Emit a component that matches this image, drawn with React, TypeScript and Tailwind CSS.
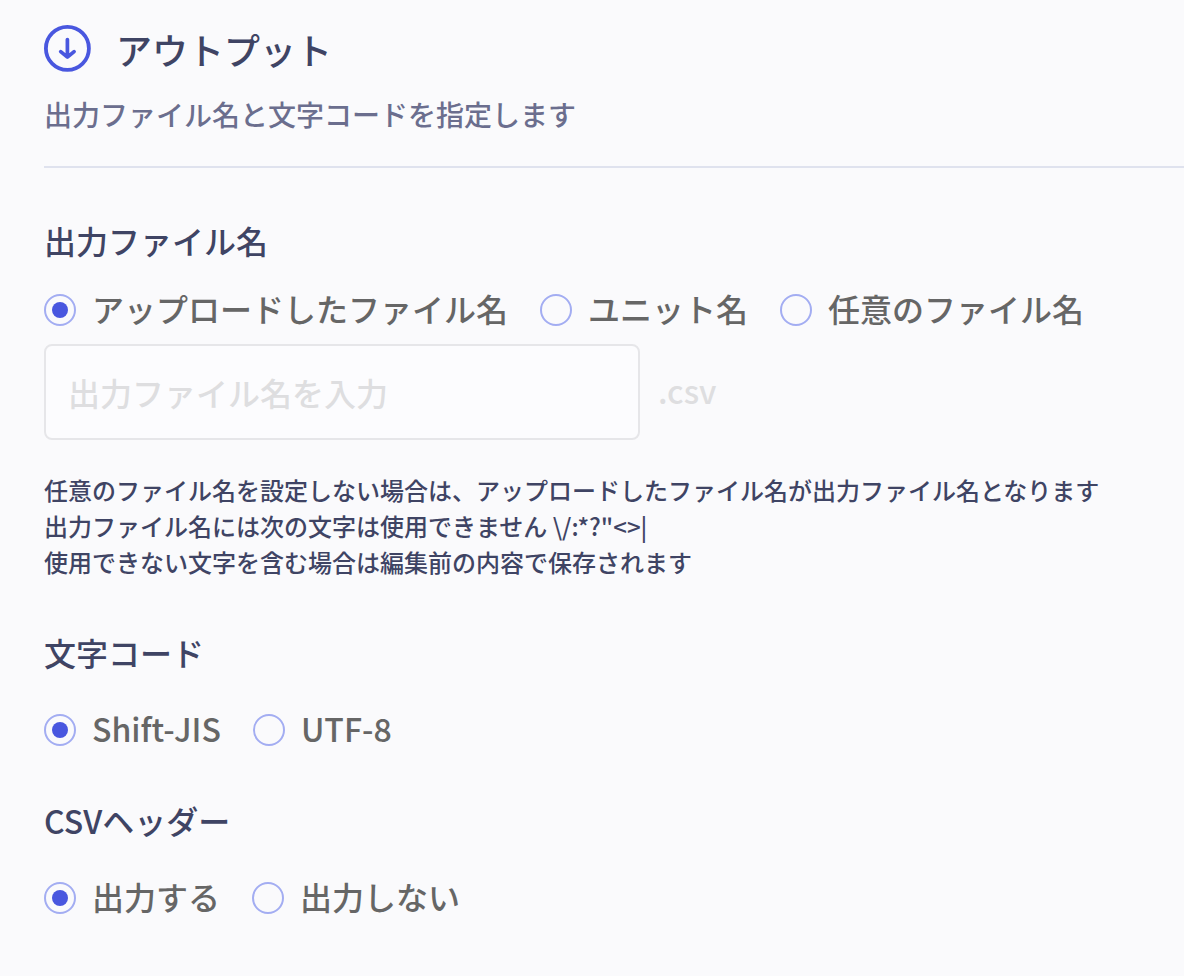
import React, { useState } from 'react';

interface RadioOption {
  value: string;
  label: string;
}

interface RadioGroupProps {
  name: string;
  legend: string;
  options: RadioOption[];
  value: string;
  onChange: (value: string) => void;
}

const RadioGroup: React.FC<RadioGroupProps> = ({ name, legend, options, value, onChange }) => (
  <div role="radiogroup" aria-label={legend} className="flex flex-wrap gap-x-8">
    {options.map((option) => (
      <label key={option.value} className="flex items-center gap-4 text-[32px] leading-12 text-[#666666]">
        <input
          type="radio"
          name={name}
          value={option.value}
          checked={value === option.value}
          onChange={() => onChange(option.value)}
          className="mt-1 size-8 shrink-0 appearance-none rounded-full border-2 border-[#a3adf2] bg-clip-content p-1.5 checked:bg-[#4957df]"
        />
        {option.label}
      </label>
    ))}
  </div>
);

const fileNameOptions: RadioOption[] = [
  { value: 'uploaded', label: 'アップロードしたファイル名' },
  { value: 'unit', label: 'ユニット名' },
  { value: 'custom', label: '任意のファイル名' },
];

const encodingOptions: RadioOption[] = [
  { value: 'sjis', label: 'Shift-JIS' },
  { value: 'utf8', label: 'UTF-8' },
];

const headerOptions: RadioOption[] = [
  { value: 'on', label: '出力する' },
  { value: 'off', label: '出力しない' },
];

export default function App() {
  const [fileNameType, setFileNameType] = useState('uploaded');
  const [fileName, setFileName] = useState('');
  const [encoding, setEncoding] = useState('sjis');
  const [csvHeader, setCsvHeader] = useState('on');
  const isCustom = fileNameType === 'custom';

  return (
    <main className="min-h-screen bg-[#fafafc] pt-6 pb-12 pl-11 font-['Noto_Sans_CJK_JP',sans-serif] font-medium text-[#3f4464]">
      <header className="border-b-2 border-[#dfe2ee] pb-8">
        <div className="flex items-center gap-6">
          <svg viewBox="0 0 48 48" fill="none" stroke="#4957df" className="size-12 shrink-0" aria-hidden="true">
            <circle cx="23.4" cy="23.4" r="21.5" strokeWidth="3.8" />
            <path d="M23.4 14.6v17.4M16.7 26.6l6.7 5.6 6.7-5.6" strokeWidth="3.7" strokeLinecap="round" strokeLinejoin="round" />
          </svg>
          <h1 className="text-[36px] leading-[50px]">アウトプット</h1>
        </div>
        <p className="mt-5 text-[28px] leading-10 text-[#6b6e8e]">出力ファイル名と文字コードを指定します</p>
      </header>

      <section className="mt-12">
        <h2 className="text-[32px] leading-12">出力ファイル名</h2>
        <div className="mt-5">
          <RadioGroup
            name="fileNameType"
            legend="出力ファイル名"
            options={fileNameOptions}
            value={fileNameType}
            onChange={setFileNameType}
          />
        </div>
        <div className="mt-3 flex items-center gap-[18px]">
          <input
            type="text"
            aria-label="出力ファイル名"
            placeholder="出力ファイル名を入力"
            value={fileName}
            disabled={!isCustom}
            onChange={(e) => setFileName(e.target.value)}
            className="h-24 w-full max-w-[596px] rounded-lg border-2 border-[#e6e6e9] bg-[#fcfcfe] px-[22px] text-[32px] placeholder:text-[#dedee0]"
          />
          <span className="pb-1 text-[32px] leading-12 text-[#dedee0]">.csv</span>
        </div>
        <p className="mt-8 text-2xl leading-9">
          任意のファイル名を設定しない場合は、アップロードしたファイル名が出力ファイル名となります
          <br />
          出力ファイル名には次の文字は使用できません \/:*?"&lt;&gt;|
          <br />
          使用できない文字を含む場合は編集前の内容で保存されます
        </p>
      </section>

      <section className="mt-12">
        <h2 className="text-[32px] leading-12">文字コード</h2>
        <div className="mt-7">
          <RadioGroup
            name="encoding"
            legend="文字コード"
            options={encodingOptions}
            value={encoding}
            onChange={setEncoding}
          />
        </div>
      </section>

      <section className="mt-11">
        <h2 className="text-[32px] leading-12">CSVヘッダー</h2>
        <div className="mt-7">
          <RadioGroup
            name="csvHeader"
            legend="CSVヘッダー"
            options={headerOptions}
            value={csvHeader}
            onChange={setCsvHeader}
          />
        </div>
      </section>
    </main>
  );
}
